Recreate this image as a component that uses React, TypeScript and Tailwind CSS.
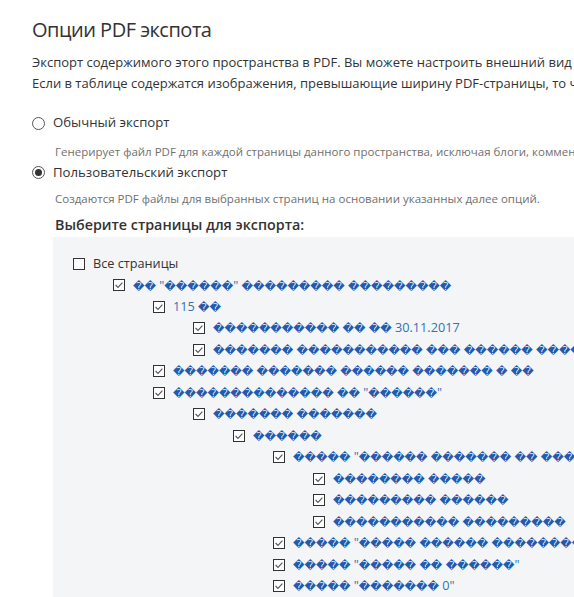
import React from 'react';

const R = '\uFFFD';
const d = (n: number) => R.repeat(n);

type Row = { level: number; text: string; checked?: boolean; plain?: boolean };

const ROWS: Row[] = [
  { level: 0, text: 'Все страницы', checked: false, plain: true },
  { level: 1, text: `${d(2)} "${d(6)}" ${d(9)} ${d(9)}` },
  { level: 2, text: '115 ' + d(2) },
  { level: 3, text: `${d(11)} ${d(2)} ${d(2)} 30.11.2017` },
  { level: 3, text: `${d(7)} ${d(11)} ${d(3)} ${d(6)} ${d(4)}` },
  { level: 2, text: `${d(7)} ${d(7)} ${d(6)} ${d(7)} ${d(1)} ${d(2)}` },
  { level: 2, text: `${d(14)} ${d(2)} "${d(6)}"` },
  { level: 3, text: `${d(7)} ${d(7)}` },
  { level: 4, text: d(6) },
  { level: 5, text: `${d(5)} "${d(6)} ${d(7)} ${d(2)} ${d(4)}` },
  { level: 6, text: `${d(8)} ${d(5)}` },
  { level: 6, text: `${d(9)} ${d(6)}` },
  { level: 6, text: `${d(11)} ${d(9)}` },
  { level: 5, text: `${d(5)} "${d(5)} ${d(6)} ${d(9)}` },
  { level: 5, text: `${d(5)} "${d(5)} ${d(2)} ${d(6)}"` },
  { level: 5, text: `${d(5)} "${d(7)} 0"` },
];

const indent = ['pl-0', 'pl-[40px]', 'pl-[80px]', 'pl-[120px]', 'pl-[160px]', 'pl-[200px]', 'pl-[240px]'];

// split a label into runs of broken glyphs and ordinary text
function Label({ text }: { text: string }) {
  const parts = text.split(/(\uFFFD+)/).filter(Boolean);
  return (
    <>
      {parts.map((p, i) =>
        p[0] === R ? (
          <span key={i} className="text-[11.2px] text-[#1f5cb0] font-['DejaVu_Sans',sans-serif]">{p}</span>
        ) : (
          <span key={i}>{p}</span>
        )
      )}
    </>
  );
}

function Checkbox({ checked }: { checked?: boolean }) {
  return (
    <svg width="12" height="12" viewBox="0 0 12 12" className="shrink-0">
      <rect x="0.5" y="0.5" width="11" height="11" fill="#fff" stroke="#333" />
      {checked && <polyline points="2.6,6 5,8.4 9.4,3.6" fill="none" stroke="#555" strokeWidth="1.1" />}
    </svg>
  );
}

function Radio({ checked }: { checked?: boolean }) {
  return (
    <span className="w-[13px] h-[13px] rounded-full border border-[#555] bg-white flex items-center justify-center shrink-0">
      {checked && <span className="w-[7px] h-[7px] rounded-full bg-[#333]" />}
    </span>
  );
}

export default function App() {
  return (
    <div className="w-[574px] h-[597px] overflow-hidden bg-white text-[#333] font-['Open_Sans','DejaVu_Sans',sans-serif]">
      <div className="w-[900px] pl-[32px] pt-[16px]">
        <h1 className="text-[20px] leading-[28px] tracking-[-0.5px] font-normal">Опции PDF экспота</h1>
        <p className="mt-[7.5px] text-[13px] leading-[21px] whitespace-nowrap">
          Экспорт содержимого этого пространства в PDF. Вы можете настроить внешний вид экспортируемого документа.
          <br />
          Если в таблице содержатся изображения, превышающие ширину PDF-страницы, то часть изображения будет обрезана.
        </p>

        <div className="mt-[18.5px] flex flex-col">
          <label className="flex items-center gap-[8px] h-[22px] text-[13.2px]">
            <Radio />
            <span>Обычный экспорт</span>
          </label>
          <div className="pl-[23px] mt-[8.5px] text-[11.5px] leading-[18px] text-[#707070] whitespace-nowrap">
            Генерирует файл PDF для каждой страницы данного пространства, исключая блоги, комментарии и вложения.
          </div>
          <label className="mt-[1px] flex items-center gap-[8px] h-[22px] text-[13.2px]">
            <Radio checked />
            <span>Пользовательский экспорт</span>
          </label>
          <div className="pl-[23px] mt-[6.5px] text-[11.5px] leading-[18px] text-[#707070] whitespace-nowrap">
            Создаются PDF файлы для выбранных страниц на основании указанных далее опций.
          </div>

          <div className="pl-[21px] mt-[7px]">
            <div className="pl-[2px] text-[14.3px] leading-[20px] font-semibold text-[#333]">Выберите страницы для экспорта:</div>
            <div className="mt-[2px] bg-[#f4f5f7] pt-[16.25px] pl-[20px] pb-[20px]">
              {ROWS.map((r, i) => (
                <div key={i} className={`flex items-center gap-[8px] h-[21.47px] whitespace-nowrap text-[12.7px] ${indent[r.level]}`}>
                  <Checkbox checked={r.checked !== false} />
                  <span className={r.plain ? 'text-[#333]' : 'text-[#3572b0]'}>
                    <Label text={r.text} />
                  </span>
                </div>
              ))}
            </div>
          </div>
        </div>
      </div>
    </div>
  );
}
